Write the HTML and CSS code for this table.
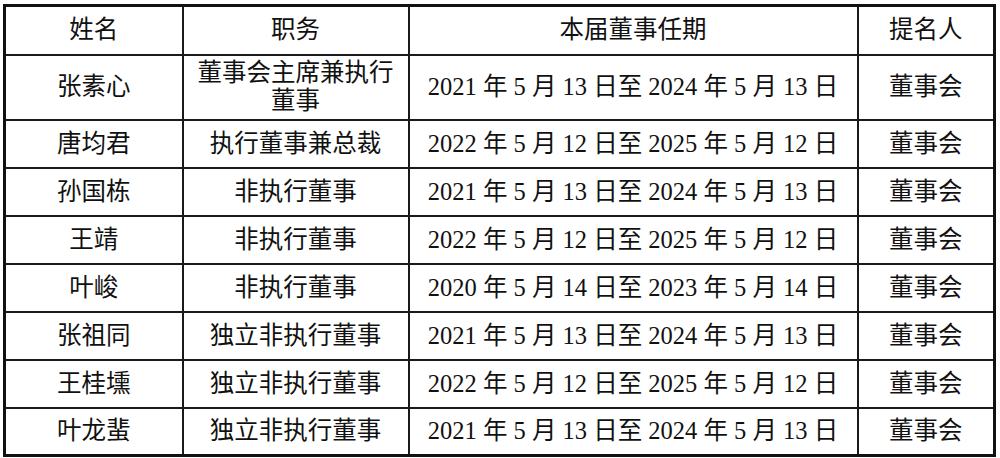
FILE: index.html
```html
<!DOCTYPE html>
<html lang="zh">
<head>
<meta charset="utf-8">
<link rel="stylesheet" href="styles.css">
</head>
<body>
<table class="board">
  <colgroup>
    <col class="c-name">
    <col class="c-role">
    <col class="c-term">
    <col class="c-nom">
  </colgroup>
  <thead>
    <tr class="head"><th>姓名</th><th>职务</th><th>本届董事任期</th><th>提名人</th></tr>
  </thead>
  <tbody>
    <tr class="tall"><td>张素心</td><td class="wrap">董事会主席兼执行<br>董事</td><td>2021 年 5 月 13 日至 2024 年 5 月 13 日</td><td>董事会</td></tr>
    <tr><td>唐均君</td><td>执行董事兼总裁</td><td>2022 年 5 月 12 日至 2025 年 5 月 12 日</td><td>董事会</td></tr>
    <tr><td>孙国栋</td><td>非执行董事</td><td>2021 年 5 月 13 日至 2024 年 5 月 13 日</td><td>董事会</td></tr>
    <tr><td>王靖</td><td>非执行董事</td><td>2022 年 5 月 12 日至 2025 年 5 月 12 日</td><td>董事会</td></tr>
    <tr><td>叶峻</td><td>非执行董事</td><td>2020 年 5 月 14 日至 2023 年 5 月 14 日</td><td>董事会</td></tr>
    <tr><td>张祖同</td><td>独立非执行董事</td><td>2021 年 5 月 13 日至 2024 年 5 月 13 日</td><td>董事会</td></tr>
    <tr><td>王桂壎</td><td>独立非执行董事</td><td>2022 年 5 月 12 日至 2025 年 5 月 12 日</td><td>董事会</td></tr>
    <tr><td>叶龙蜚</td><td>独立非执行董事</td><td>2021 年 5 月 13 日至 2024 年 5 月 13 日</td><td>董事会</td></tr>
  </tbody>
</table>
</body>
</html>
```

FILE: styles.css
```css
html, body {
  margin: 0;
  padding: 0;
  background: #ffffff;
}

body {
  padding: 4px 0 0 3px;
}

.board {
  border-collapse: collapse;
  table-layout: fixed;
  width: 992px;
  border: 3px solid #111;
  font-family: "Liberation Serif", "Noto Sans CJK SC", serif;
  font-size: 24.5px;
  color: #111;
}

.c-name { width: 178px; }
.c-role { width: 226px; }
.c-term { width: 449px; }
.c-nom { width: 137px; }

.board th,
.board td {
  border: 2px solid #1a1a1a;
  text-align: center;
  vertical-align: middle;
  padding: 0;
  font-weight: normal;
  line-height: 28px;
  white-space: nowrap;
}

.board tr { height: 48px; }
.board tr.head { height: 49px; }
.board tr.tall { height: 65px; }
```
